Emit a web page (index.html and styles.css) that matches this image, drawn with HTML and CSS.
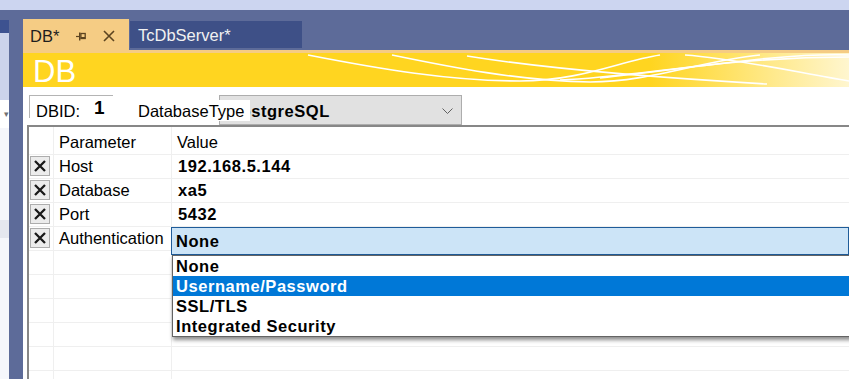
FILE: index.html
```html
<!DOCTYPE html>
<html lang="en">
<head>
    <meta charset="UTF-8">
    <meta name="viewport" content="width=device-width, initial-scale=1.0">
    <title>DB - TcDbServer</title>
    <link rel="stylesheet" href="styles.css">
</head>
<body>
    <div class="top-strip"></div>
    <div class="workspace">
        <div class="side-panel">
            <div class="side-title"></div>
            <div class="side-toolbar"></div>
            <div class="side-combo"><span class="side-arrow">&#9662;</span></div>
            <div class="side-list">
                <div class="side-item"></div>
            </div>
        </div>

        <div class="doc-well">
            <div class="tabs">
                <div class="tab active">
                    <span>DB*</span>
                    <svg class="pin" width="10" height="9" viewBox="0 0 10 9">
                        <path d="M0 4.5H3" stroke="#5c4420" stroke-width="1.2"/>
                        <rect x="3" y="0.5" width="1.4" height="8" fill="#5c4420"/>
                        <rect x="4.9" y="1.5" width="4.3" height="5" fill="none" stroke="#5c4420" stroke-width="1.3"/>
                        <rect x="4.9" y="5" width="4.3" height="1.6" fill="#5c4420"/>
                    </svg>
                    <svg class="close" width="12" height="12" viewBox="0 0 12 12">
                        <path d="M1 1L11 11M11 1L1 11" stroke="#5c4420" stroke-width="1.6"/>
                    </svg>
                </div>
                <div class="tab">TcDbServer*</div>
            </div>

            <div class="doc">
                <div class="banner">
                    <div class="banner-title">DB</div>
                    <svg class="banner-waves" width="826" height="34" viewBox="23 0 826 34" fill="none" stroke="#fff" stroke-width="1.6">
                        <path d="M308 2 C380 16, 450 28, 520 28 C580 28, 620 8, 660 2"/>
                        <path d="M392 2 C450 14, 520 28, 590 29 C650 29, 700 8, 760 2"/>
                        <path d="M467 3 C560 18, 680 26, 767 31"/>
                        <path d="M560 27 C640 24, 720 4, 849 4"/>
                        <path d="M685 2 C740 6, 800 20, 849 28"/>
                        <path d="M600 25 C700 14, 780 0, 849 2"/>
                    </svg>
                </div>

                <div class="toolbar">
                    <div class="dbid">
                        <span class="dbid-label">DBID:</span>
                        <span class="dbid-value">1</span>
                    </div>
                    <div class="type-label">DatabaseType</div>
                    <div class="combo">
                        <span>PostgreSQL</span>
                        <svg class="chevron" width="11" height="6" viewBox="0 0 11 6">
                            <path d="M0.5 0.5L5.5 5.5L10.5 0.5" fill="none" stroke="#606060" stroke-width="1"/>
                        </svg>
                    </div>
                </div>

                <div class="grid">
                    <div class="grid-row grid-head">
                        <div class="cell-btn"></div>
                        <div class="cell-name">Parameter</div>
                        <div class="cell-value">Value</div>
                    </div>
                    <div class="grid-row">
                        <div class="cell-btn"><span class="remove-btn"><svg width="12" height="12" viewBox="0 0 12 12"><path d="M1 1L11 11M11 1L1 11" stroke="#1a1a1a" stroke-width="2.3"/></svg></span></div>
                        <div class="cell-name">Host</div>
                        <div class="cell-value">192.168.5.144</div>
                    </div>
                    <div class="grid-row">
                        <div class="cell-btn"><span class="remove-btn"><svg width="12" height="12" viewBox="0 0 12 12"><path d="M1 1L11 11M11 1L1 11" stroke="#1a1a1a" stroke-width="2.3"/></svg></span></div>
                        <div class="cell-name">Database</div>
                        <div class="cell-value">xa5</div>
                    </div>
                    <div class="grid-row">
                        <div class="cell-btn"><span class="remove-btn"><svg width="12" height="12" viewBox="0 0 12 12"><path d="M1 1L11 11M11 1L1 11" stroke="#1a1a1a" stroke-width="2.3"/></svg></span></div>
                        <div class="cell-name">Port</div>
                        <div class="cell-value">5432</div>
                    </div>
                    <div class="grid-row">
                        <div class="cell-btn"><span class="remove-btn"><svg width="12" height="12" viewBox="0 0 12 12"><path d="M1 1L11 11M11 1L1 11" stroke="#1a1a1a" stroke-width="2.3"/></svg></span></div>
                        <div class="cell-name">Authentication</div>
                        <div class="cell-value editing">
                            <div class="editor">None</div>
                            <div class="dropdown">
                                <div class="option">None</div>
                                <div class="option selected">Username/Password</div>
                                <div class="option">SSL/TLS</div>
                                <div class="option">Integrated Security</div>
                            </div>
                        </div>
                    </div>
                    <div class="grid-row"><div class="cell-btn"></div><div class="cell-name"></div><div class="cell-value"></div></div>
                    <div class="grid-row"><div class="cell-btn"></div><div class="cell-name"></div><div class="cell-value"></div></div>
                    <div class="grid-row"><div class="cell-btn"></div><div class="cell-name"></div><div class="cell-value"></div></div>
                    <div class="grid-row"><div class="cell-btn"></div><div class="cell-name"></div><div class="cell-value"></div></div>
                    <div class="grid-row"><div class="cell-btn"></div><div class="cell-name"></div><div class="cell-value"></div></div>
                    <div class="grid-row"><div class="cell-btn"></div><div class="cell-name"></div><div class="cell-value"></div></div>
                </div>
            </div>
        </div>
    </div>
</body>
</html>
```

FILE: styles.css
```css
* {
    box-sizing: border-box;
}

body {
    margin: 0;
    width: 849px;
    height: 379px;
    overflow: hidden;
    background: #5d6b99;
    font-family: "Liberation Sans", Arial, sans-serif;
    font-size: 16.5px;
    color: #000;
}

.top-strip {
    height: 10px;
    background: #ccd5f0;
}

.workspace {
    display: flex;
    height: 369px;
}

/* left tool window, mostly cut off */
.side-panel {
    width: 9px;
    margin-top: 10px;
    display: flex;
    flex-direction: column;
}

.side-title {
    height: 13px;
    background: #3d5290;
}

.side-toolbar {
    height: 67px;
    background: #ccd3eb;
}

.side-combo {
    height: 28px;
    background: #fff;
    display: flex;
    align-items: center;
    justify-content: flex-end;
}

.side-arrow {
    font-size: 9px;
    color: #717171;
}

.side-list {
    flex: 1;
    background: #f5f6fb;
    padding-top: 92px;
}

.side-item {
    height: 18px;
    background: #e5e7ef;
}

/* document area */
.doc-well {
    flex: 1;
    min-width: 0;
    margin-left: 14px;
    display: flex;
    flex-direction: column;
}

.tabs {
    display: flex;
    align-items: flex-start;
    height: 40px;
    padding-top: 9px;
}

.tab {
    display: flex;
    align-items: center;
    width: 172px;
    height: 27px;
    margin-top: 2px;
    margin-left: 1px;
    padding: 2px 0 0 8px;
    background: #3e5087;
    color: #f1f1f1;
}

.tab.active {
    width: 106px;
    height: 31px;
    margin: 0;
    padding: 3px 0 0 7px;
    background: #f5cc84;
    color: #1e1e1e;
}

.pin {
    margin-left: 17px;
}

.close {
    margin-left: 17px;
}

.doc {
    flex: 1;
    display: flex;
    flex-direction: column;
    background: #fff;
    border-top: 3px solid #f5cc84;
}

.banner {
    position: relative;
    display: flex;
    align-items: flex-end;
    height: 34px;
    padding-left: 10px;
    background: linear-gradient(to right, #ffd520 0, #ffd520 76%, #fff6cf 100%);
}

.banner-title {
    font-size: 31px;
    line-height: 30px;
    color: #fff;
}

.banner-waves {
    position: absolute;
    left: 0;
    top: 0;
}

.toolbar {
    display: flex;
    align-items: flex-start;
    height: 38px;
}

.dbid {
    display: flex;
    align-items: flex-start;
    width: 84px;
    height: 23px;
    margin: 8px 0 0 6px;
    padding-left: 6px;
    border-top: 1px solid #b4b4b4;
    border-left: 1px solid #b4b4b4;
}

.dbid-label {
    margin-top: 6px;
    line-height: 18px;
}

.dbid-value {
    margin: 2px 0 0 14px;
    font-size: 19px;
    font-weight: bold;
    line-height: 20px;
}

.type-label {
    position: relative;
    z-index: 1;
    width: 115px;
    height: 21px;
    margin: 13px -31px 0 22px;
    padding: 1px 0 0 3px;
    line-height: 20px;
    background: #fff;
}

.combo {
    display: flex;
    align-items: flex-start;
    width: 243px;
    height: 30px;
    margin-top: 8px;
    padding: 2px 0 0 9px;
    background: #e1e1e1;
    border: 1px solid #adadad;
    font-weight: bold;
    letter-spacing: 0.55px;
    line-height: 26px;
}

.chevron {
    margin: 10px 8px 0 auto;
}

/* property grid */
.grid {
    flex: 1;
    margin-left: 4px;
    border-top: 2px solid #878787;
    border-left: 2px solid #878787;
}

.grid-row {
    display: flex;
    height: 24px;
    border-bottom: 1px solid #efefef;
    line-height: 23px;
}

.grid-head {
    height: 28px;
}

.grid-head > div {
    padding-top: 4px;
}

.cell-btn {
    width: 25px;
    border-right: 1px solid #efefef;
}

.cell-name {
    width: 118px;
    padding-left: 5px;
    border-right: 1px solid #efefef;
    white-space: nowrap;
}

.cell-value {
    flex: 1;
    padding-left: 6px;
    font-weight: bold;
    letter-spacing: 0.55px;
}

.grid-head .cell-value {
    padding-left: 5px;
    font-weight: normal;
    letter-spacing: 0;
}

.remove-btn {
    display: flex;
    align-items: center;
    justify-content: center;
    width: 20px;
    height: 20px;
    margin: 1px 0 0 1px;
    background: #ececec;
    border: 1px solid #adadad;
}

.editing {
    position: relative;
}

.editor {
    position: absolute;
    left: -1px;
    top: 0;
    right: 0;
    height: 28px;
    z-index: 2;
    padding-left: 4px;
    line-height: 26px;
    background: #cce4f7;
    border: 1px solid #1f5c99;
}

.dropdown {
    position: absolute;
    left: 0;
    top: 28px;
    right: -4px;
    z-index: 3;
    background: #fff;
    border: 1px solid #646464;
    box-shadow: 1px 3px 4px rgba(0, 0, 0, 0.45);
}

.option {
    height: 20px;
    padding-left: 3px;
    line-height: 20px;
}

.option.selected {
    background: #0078d7;
    color: #fff;
}
```
